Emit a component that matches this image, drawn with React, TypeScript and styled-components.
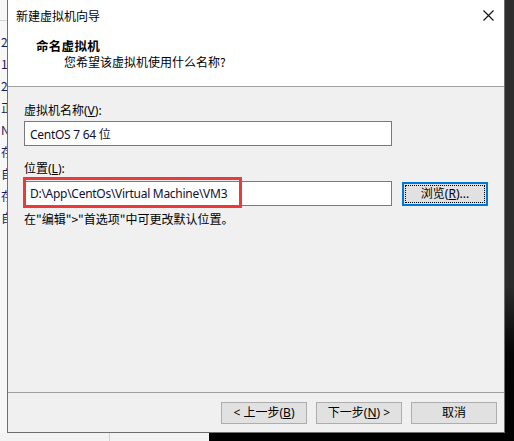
import styled, { createGlobalStyle } from 'styled-components'

// ── Global ─────────────────────────────────────────────────────────────────────

const GlobalStyle = createGlobalStyle`
  html, body { margin: 0; padding: 0; }
  body {
    width: 514px;
    height: 441px;
    overflow: hidden;
    font-family: "Noto Sans", "Noto Sans CJK SC", sans-serif;
    font-size: 12px;
    color: #000;
  }
`

// ── Desktop behind the wizard ──────────────────────────────────────────────────

const Desktop = styled.div`
  display: grid;
  grid-template-columns: 7px 498px 9px;
  grid-template-rows: 433px 8px;
  width: 514px;
  height: 441px;
  background: #1c1c1c;
`

const LeftStrip = styled.div`
  grid-column: 1;
  grid-row: 1;
  overflow: hidden;
  background: #f7f7f7;
  display: flex;
  flex-direction: column;
  padding-top: 20px;
`

const StripRule = styled.div`
  height: 1px;
  background: #d6d6d6;
  margin-bottom: 10px;
`

const StripLine = styled.div`
  height: 22px;
  line-height: 22px;
  font-family: "Noto Sans CJK SC", sans-serif;
  font-size: 12px;
  color: #1a1a60;
  white-space: nowrap;
  padding-left: 1px;
`

const RightStrip = styled.div`
  grid-column: 3;
  grid-row: 1 / span 2;
  background: linear-gradient(#2e2e2e 0%, #2b2b2b 65%, #050505 80%, #000 100%);
`

const BottomStrip = styled.div`
  grid-column: 1 / span 2;
  grid-row: 2;
  display: flex;
`

const BottomLight = styled.div`
  width: 209px;
  background: #f3f3f3;
  display: flex;
`

const BottomCell = styled.div<{ $w: number }>`
  width: ${p => p.$w}px;
  border-right: 1px solid #d0d0d0;
`

const BottomDark = styled.div`
  flex: 1;
  background: #000;
`

// ── Dialog ─────────────────────────────────────────────────────────────────────

const Dialog = styled.div`
  grid-column: 2;
  grid-row: 1;
  display: flex;
  flex-direction: column;
  border: 1px solid #6f6f6f;
  border-top: 0;
  background: #f0f0f0;
  box-sizing: border-box;
`

const TitleBar = styled.div`
  height: 30px;
  display: flex;
  align-items: center;
  justify-content: space-between;
  background: #fff;
  padding: 0 10px 0 8px;
  font-family: "Noto Sans CJK SC", sans-serif;
`

const CloseIcon = () => (
  <svg width="11" height="11" viewBox="0 0 11 11">
    <path d="M0.5 0.5L10.5 10.5M10.5 0.5L0.5 10.5" stroke="#111" strokeWidth="1.1" />
  </svg>
)

const Header = styled.div`
  height: 57px;
  background: #fff;
  border-bottom: 1px solid #a0a0a0;
  padding: 8px 0 0 28px;
  box-sizing: border-box;
`

const HeaderTitle = styled.div`
  font-family: "Noto Sans CJK SC", sans-serif;
  font-weight: 700;
  font-size: 12.5px;
  line-height: 16px;
  letter-spacing: 0.3px;
`

const HeaderSub = styled.div`
  font-family: "Noto Sans CJK SC", sans-serif;
  line-height: 16px;
  padding-left: 28px;
`

const Body = styled.div`
  flex: 1;
  padding: 16px 0 0 16px;
  display: flex;
  flex-direction: column;
`

const Label = styled.div<{ $gap: number }>`
  line-height: 16px;
  margin-bottom: ${p => p.$gap}px;
`

const Key = styled.span`text-decoration: underline;`

const FieldRow = styled.div`
  display: flex;
  align-items: center;
  gap: 10px;
  position: relative;
`

const TextBox = styled.div<{ $mb: number }>`
  width: 368px;
  height: 25px;
  box-sizing: border-box;
  border: 1px solid #7a7a7a;
  background: #fff;
  padding-left: 5px;
  display: flex;
  align-items: center;
  margin-bottom: ${p => p.$mb}px;
  color: #101030;
  letter-spacing: -0.28px;
  white-space: nowrap;
`

const Highlight = styled.div`
  position: absolute;
  left: -1px;
  top: -4px;
  width: 219px;
  height: 31px;
  box-sizing: border-box;
  border: 3px solid #ec3a3a;
  pointer-events: none;
`

const BrowseButton = styled.button`
  width: 86px;
  height: 24px;
  margin-top: 1px;
  box-sizing: border-box;
  border: 2px solid #0078d7;
  background: #e1e1e1;
  padding: 1px;
  font: inherit;
  cursor: pointer;
  display: flex;
`

const FocusRing = styled.span`
  flex: 1;
  border: 1px dotted #000;
  display: flex;
  align-items: center;
  justify-content: center;
  line-height: 16px;
`

const Hint = styled.div`
  line-height: 16px;
  margin-top: 5px;
  font-family: "Noto Sans CJK SC", sans-serif;
`

const Footer = styled.div`
  height: 40px;
  border-top: 1px solid #a0a0a0;
  display: flex;
  justify-content: flex-end;
  align-items: flex-start;
  gap: 9px;
  padding: 9px 7px 0 0;
  box-sizing: border-box;
`

const NavButton = styled.button`
  width: 86px;
  height: 22px;
  box-sizing: border-box;
  border: 1px solid #adadad;
  background: #e1e1e1;
  font: inherit;
  color: #000;
  padding: 0;
  line-height: 20px;
  cursor: pointer;
`

// ── Component ──────────────────────────────────────────────────────────────────

const stripChars = ['2', '1', '2', '正', 'N', '存', '自', '存', '自']

export default function App() {
  return (
    <>
      <GlobalStyle />
      <Desktop>
        <LeftStrip>
          <StripRule />
          {stripChars.map((c, i) => <StripLine key={i}>{c}</StripLine>)}
        </LeftStrip>

        <Dialog>
          <TitleBar>
            <span>新建虚拟机向导</span>
            <CloseIcon />
          </TitleBar>

          <Header>
            <HeaderTitle>命名虚拟机</HeaderTitle>
            <HeaderSub>您希望该虚拟机使用什么名称?</HeaderSub>
          </Header>

          <Body>
            <Label $gap={2}>虚拟机名称(<Key>V</Key>):</Label>
            <TextBox $mb={15}>CentOS 7 64 位</TextBox>

            <Label $gap={4}>位置(<Key>L</Key>):</Label>
            <FieldRow>
              <TextBox $mb={0}>D:\App\CentOs\Virtual Machine\VM3</TextBox>
              <BrowseButton>
                <FocusRing>浏览(<Key>R</Key>)...</FocusRing>
              </BrowseButton>
              <Highlight />
            </FieldRow>

            <Hint>在"编辑"&gt;"首选项"中可更改默认位置。</Hint>
          </Body>

          <Footer>
            <NavButton>&lt; 上一步(<Key>B</Key>)</NavButton>
            <NavButton>下一步(<Key>N</Key>) &gt;</NavButton>
            <NavButton>取消</NavButton>
          </Footer>
        </Dialog>

        <RightStrip />

        <BottomStrip>
          <BottomLight>
            <BottomCell $w={109} />
          </BottomLight>
          <BottomDark />
        </BottomStrip>
      </Desktop>
    </>
  )
}
